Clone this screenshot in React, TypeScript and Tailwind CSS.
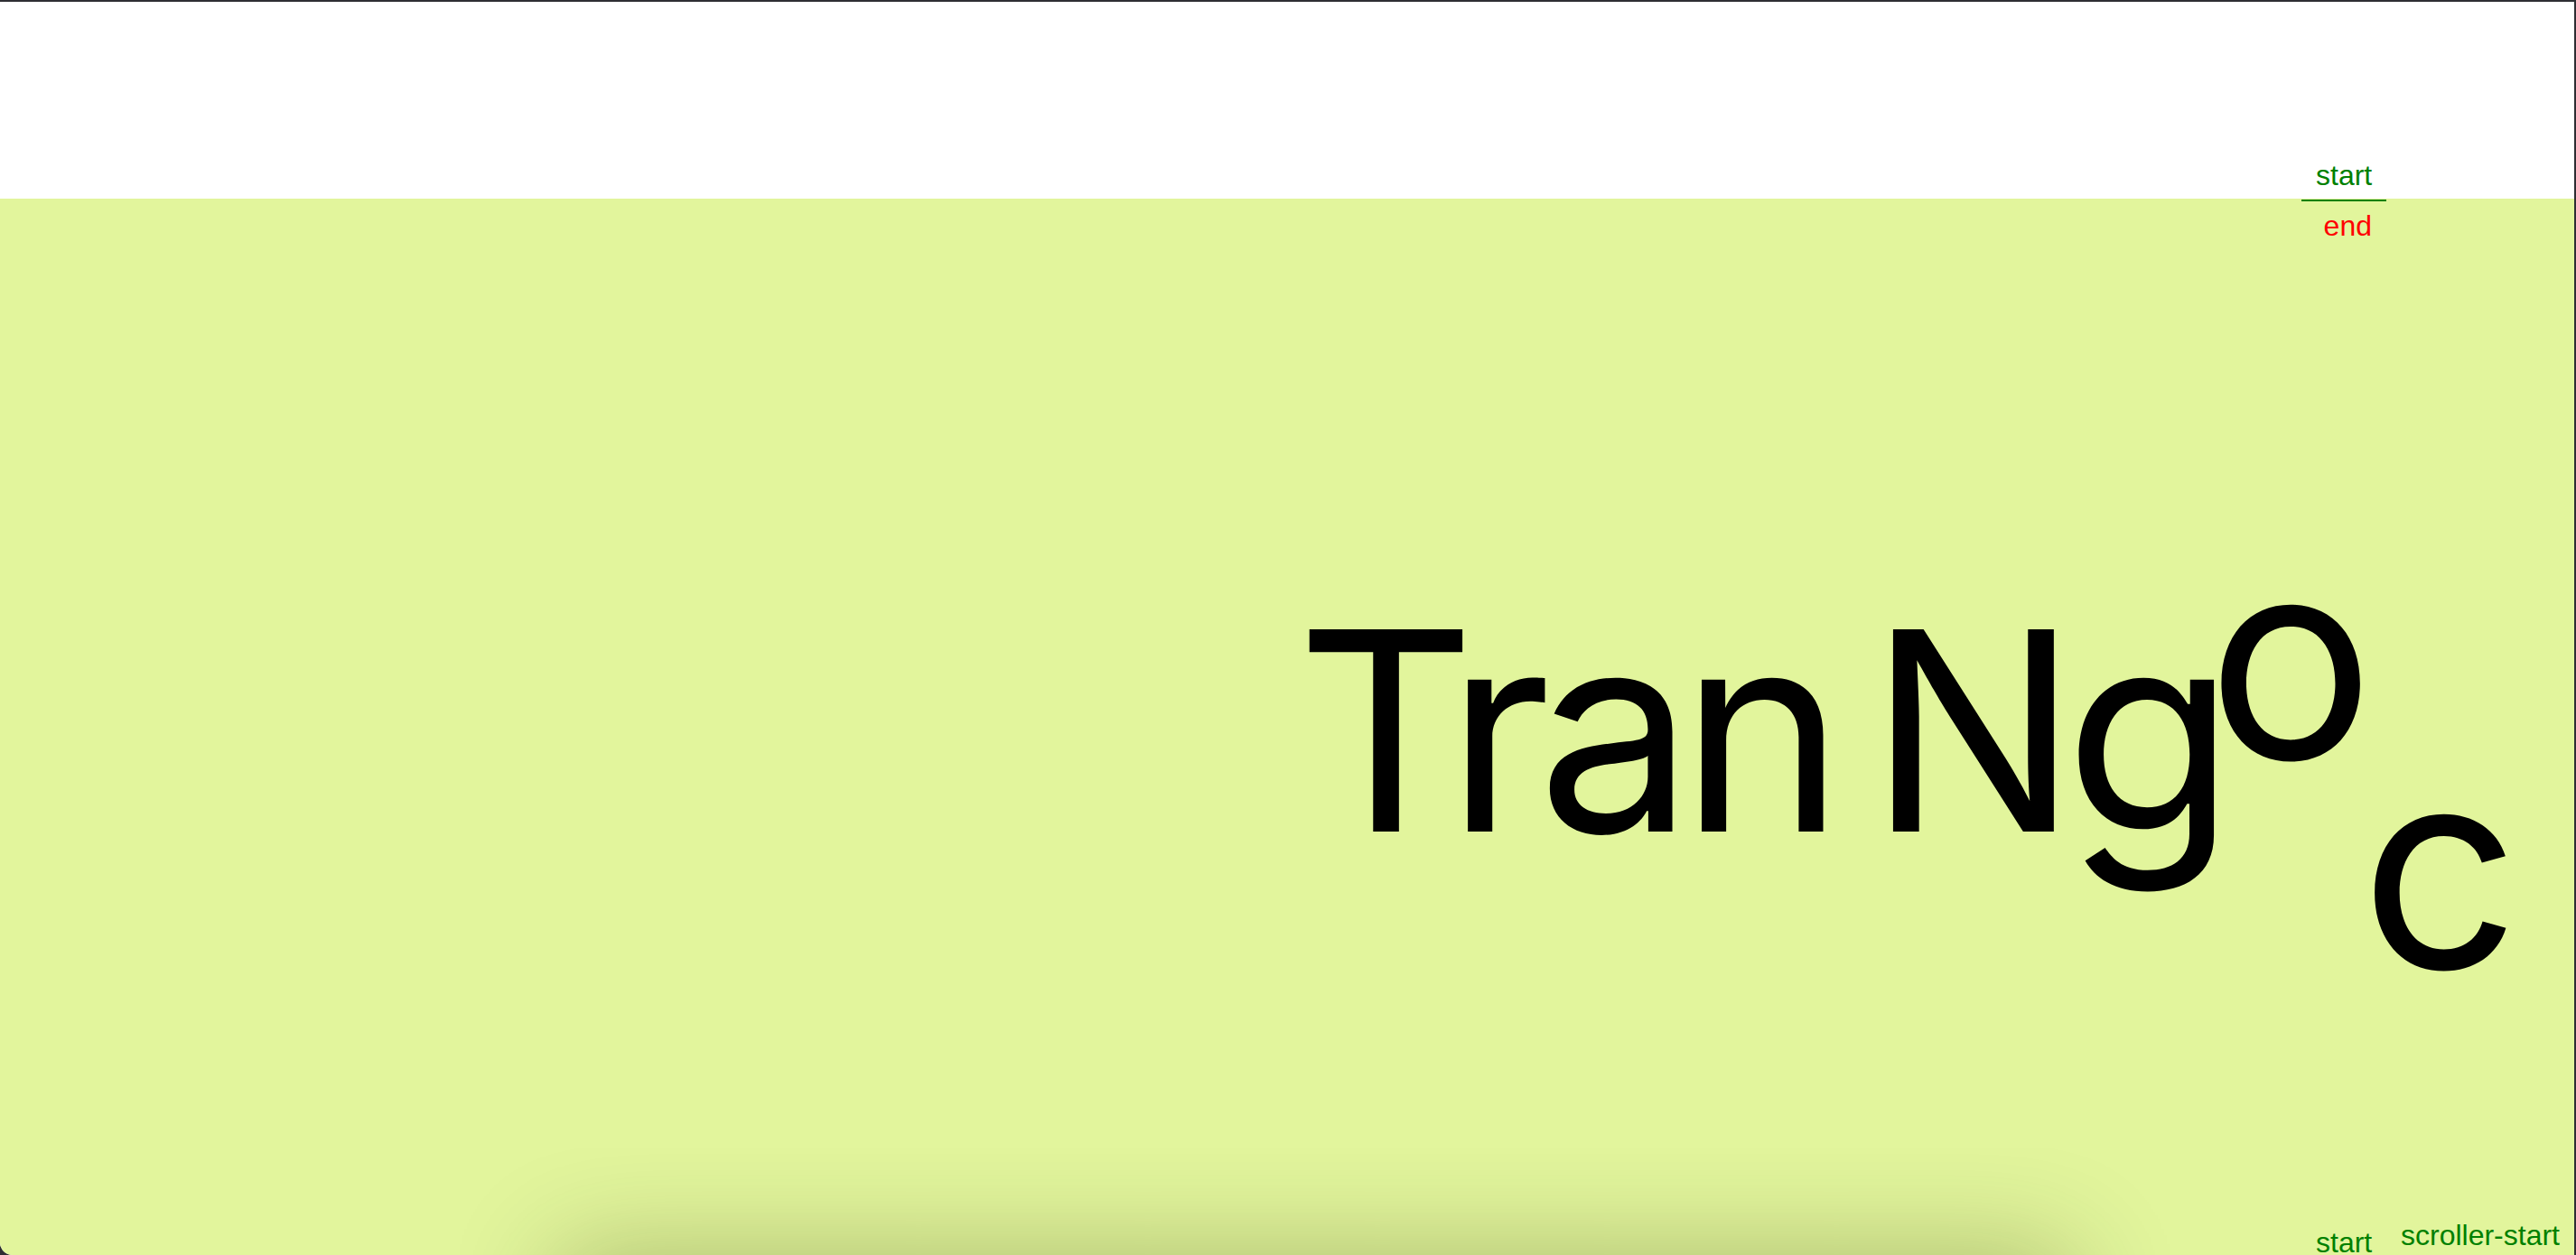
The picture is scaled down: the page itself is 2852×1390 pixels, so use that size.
import React from 'react';

// GSAP-style debug markers that sit over the page
const Marker = ({ label, color, className }: { label: string; color: string; className: string }) => (
    <div
        className={`absolute px-4 py-2 text-[32px] leading-[1.15] whitespace-nowrap ${className}`}
        style={{ color, fontFamily: '"Liberation Sans", Arial, sans-serif' }}
    >
        {label}
    </div>
);

export default function App() {
    return (
        <div className="h-screen w-full overflow-hidden bg-[#2e2e33] pt-[2px] pr-[2px]">
            <div className="relative h-full overflow-hidden rounded-bl-[14px] bg-white flex flex-col">

                {/* empty top band */}
                <div className="h-[218px] flex-shrink-0 bg-white" />

                {/* hero */}
                <section className="relative flex-1 overflow-hidden bg-[#e2f59c]">
                    <h1
                        className="pl-[1435px] pt-[435px] text-[308px] leading-none font-normal tracking-[-15px] [word-spacing:-30px] text-black whitespace-nowrap"
                        style={{ fontFamily: 'Inter, "Liberation Sans", sans-serif' }}
                    >
                        <span>Tran Ng</span>
                        <span className="inline-block -ml-[16px] -translate-y-[81px]">o</span>
                        <span className="inline-block translate-y-[151px]">c</span>
                    </h1>

                    {/* shadow from the next panel peeking up */}
                    <div className="absolute top-full left-[620px] right-[560px] h-[200px] shadow-[0_0_120px_rgba(40,50,0,0.3)]" />
                </section>

                {/* markers */}
                <Marker label="start" color="#008000" className="top-[166px] left-[2548px] border-b-2 border-[#008000]" />
                <Marker label="end" color="#ff0000" className="top-[222px] right-[208px]" />
                <Marker label="start" color="#008000" className="top-[1348px] left-[2548px]" />
                <Marker label="scroller-start" color="#008000" className="top-[1340px] right-[0px]" />
            </div>
        </div>
    );
}
